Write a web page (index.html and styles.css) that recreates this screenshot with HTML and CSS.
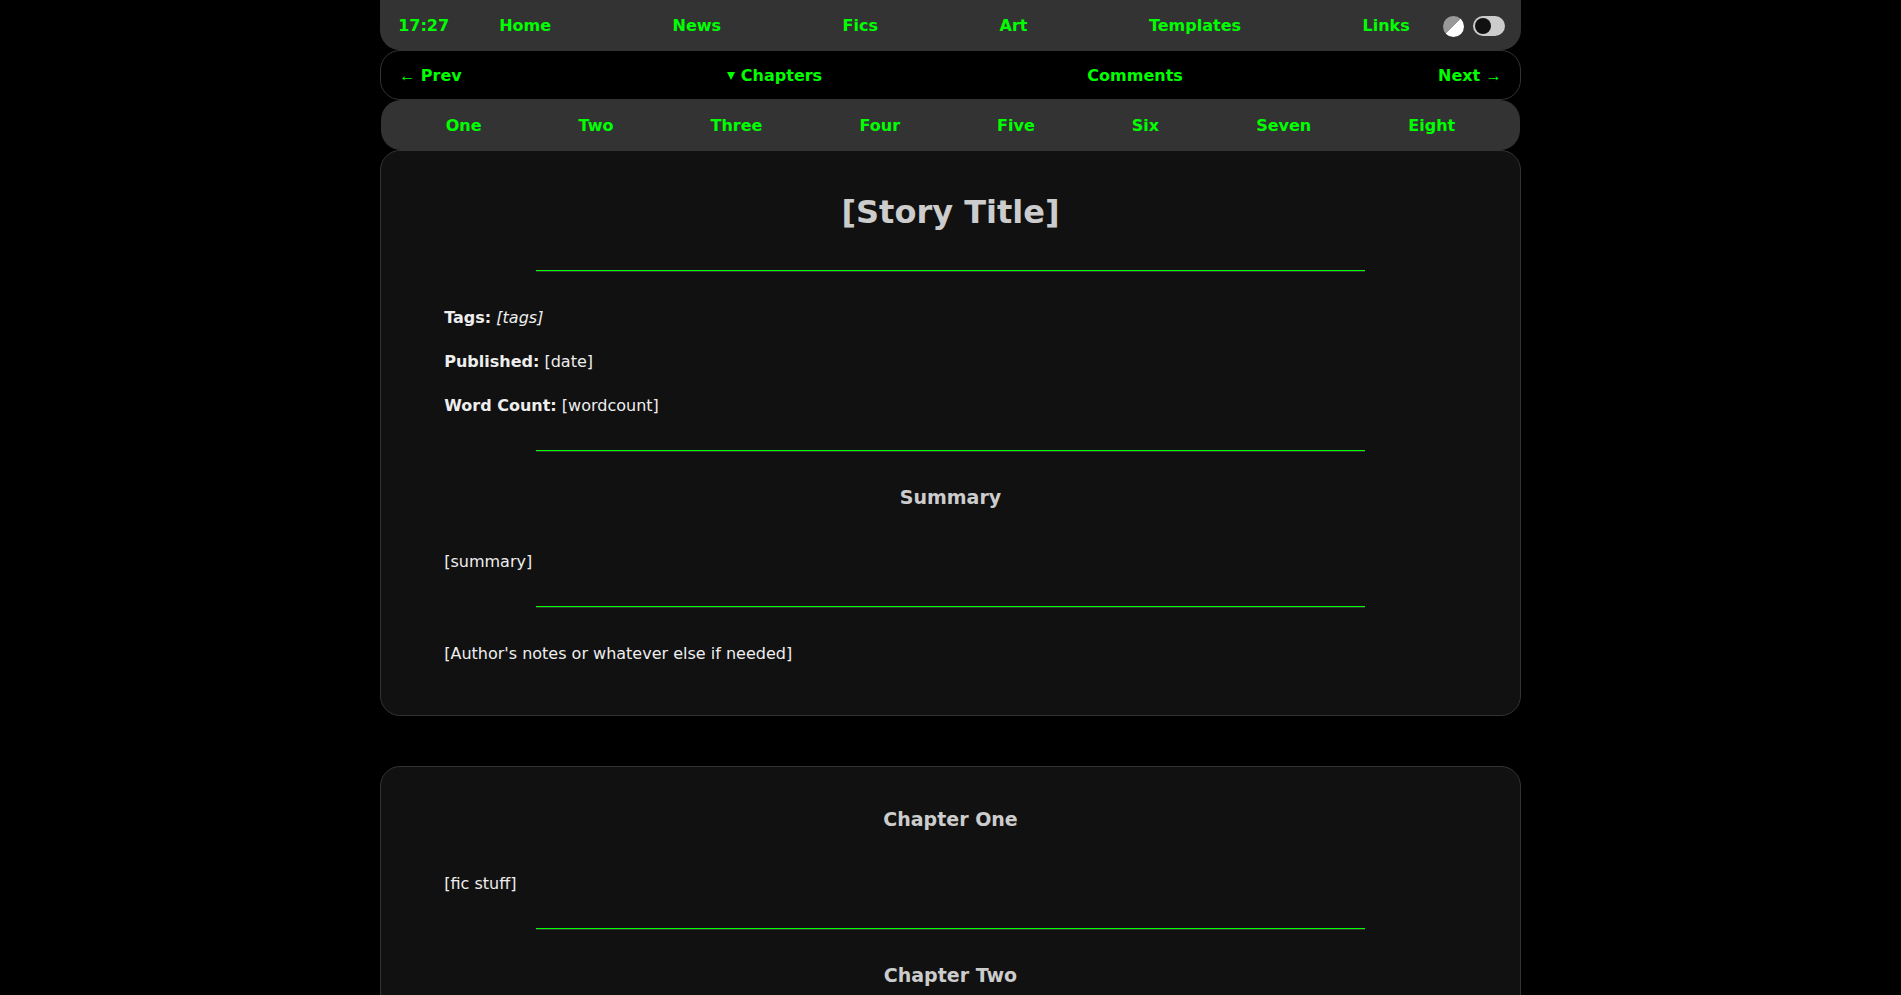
FILE: index.html
```html
<!DOCTYPE html>
<html lang="en">
<head>
  <meta charset="UTF-8" />
  <meta name="viewport" content="width=device-width, initial-scale=1" />
  <title>[Story Title]</title>
  <link rel="stylesheet" href="styles.css">
</head>
<body>
  <div class="page">

    <!-- Site header -->
    <header class="topbar">
      <time class="clock">17:27</time>
      <nav class="main-nav">
        <a href="#">Home</a>
        <a href="#">News</a>
        <a href="#">Fics</a>
        <a href="#">Art</a>
        <a href="#">Templates</a>
        <a href="#">Links</a>
      </nav>
      <div class="theme">
        <label class="contrast" for="theme-switch" aria-label="Light theme"></label>
        <input type="checkbox" class="switch" id="theme-switch" />
      </div>
    </header>

    <!-- Story navigation -->
    <nav class="story-nav">
      <a href="#"><span class="arrow">←</span> Prev</a>
      <button type="button" class="chapters-btn"><span class="caret"></span>Chapters</button>
      <a href="#">Comments</a>
      <a href="#">Next <span class="arrow">→</span></a>
    </nav>

    <nav class="chapter-list">
      <a href="#one">One</a>
      <a href="#two">Two</a>
      <a href="#">Three</a>
      <a href="#">Four</a>
      <a href="#">Five</a>
      <a href="#">Six</a>
      <a href="#">Seven</a>
      <a href="#">Eight</a>
    </nav>

    <main>
      <section class="card">
        <h1>[Story Title]</h1>
        <hr>
        <p><b>Tags:</b> <i>[tags]</i></p>
        <p><b>Published:</b> [date]</p>
        <p><b>Word Count:</b> [wordcount]</p>
        <hr>
        <h2>Summary</h2>
        <p>[summary]</p>
        <hr>
        <p>[Author's notes or whatever else if needed]</p>
      </section>

      <section class="card">
        <h2 id="one">Chapter One</h2>
        <p>[fic stuff]</p>
        <hr>
        <h2 id="two">Chapter Two</h2>
      </section>
    </main>

  </div>
</body>
</html>
```

FILE: styles.css
```css
body {
  margin: 0;
  background: #000;
  color: #eee;
  font-family: Verdana, "DejaVu Sans", sans-serif;
  font-size: 16px;
  line-height: 24px;
}

.page {
  width: 60%;
  margin: 0 auto;
}

a {
  color: #0f0;
  font-weight: bold;
  text-decoration: none;
}

a:hover {
  text-decoration: underline;
}

/* Bars */
.topbar, .story-nav, .chapter-list {
  display: flex;
  align-items: center;
  box-sizing: border-box;
  height: 50px;
  border-radius: 20px;
}

.topbar {
  padding: 2px 16px 0 18px;
  background: #333;
  border-radius: 0 0 20px 20px;
}

.clock {
  color: #0f0;
  font-weight: bold;
}

.main-nav {
  flex: 1;
  display: flex;
  justify-content: space-between;
  margin: 0 33px 0 50px;
}

.theme {
  display: flex;
  align-items: center;
  gap: 9px;
}

.contrast {
  width: 21px;
  height: 21px;
  border-radius: 50%;
  background: linear-gradient(135deg, #999 50%, #fff 50%);
  cursor: pointer;
}

.switch {
  appearance: none;
  display: flex;
  align-items: center;
  box-sizing: border-box;
  width: 32px;
  height: 20px;
  margin: 0;
  padding: 2px;
  border-radius: 10px;
  background: #ccc;
  cursor: pointer;
}

.switch::before {
  content: "";
  width: 16px;
  height: 16px;
  border-radius: 50%;
  background: #111;
}

.switch:checked {
  justify-content: flex-end;
}

.story-nav {
  justify-content: space-between;
  padding: 2px 18px 0;
  border: 1px solid #333;
}

.arrow {
  font-family: "Liberation Sans", Arial, sans-serif;
  font-weight: normal;
}

.chapters-btn {
  display: flex;
  align-items: center;
  gap: 6px;
  padding: 0 10px;
  border: none;
  background: none;
  color: #0f0;
  font: inherit;
  font-weight: bold;
  cursor: pointer;
}

.caret {
  border: 4px solid transparent;
  border-top: 8px solid #0f0;
  border-bottom: none;
}

.chapter-list {
  justify-content: space-around;
  margin: 0 1px;
  padding: 2px 16px 0;
  background: #333;
}

/* Content */
.card {
  margin-bottom: 50px;
  padding: 7px 51px 29px;
  border: 1px solid #333;
  border-radius: 20px;
  background: #111;
}

h1, h2 {
  color: #ccc;
  text-align: center;
}

h1 {
  margin: 32px 0 36px;
  font-size: 32px;
  line-height: 44px;
}

h2 {
  margin: 34px 0 42px;
  font-size: 19px;
  line-height: 22px;
}

p {
  margin: 20px 12px;
}

hr {
  width: 80%;
  margin: 32px auto 34px;
  border: none;
  border-top: 1px solid #0f0;
  border-bottom: 1px solid #333;
}
```
